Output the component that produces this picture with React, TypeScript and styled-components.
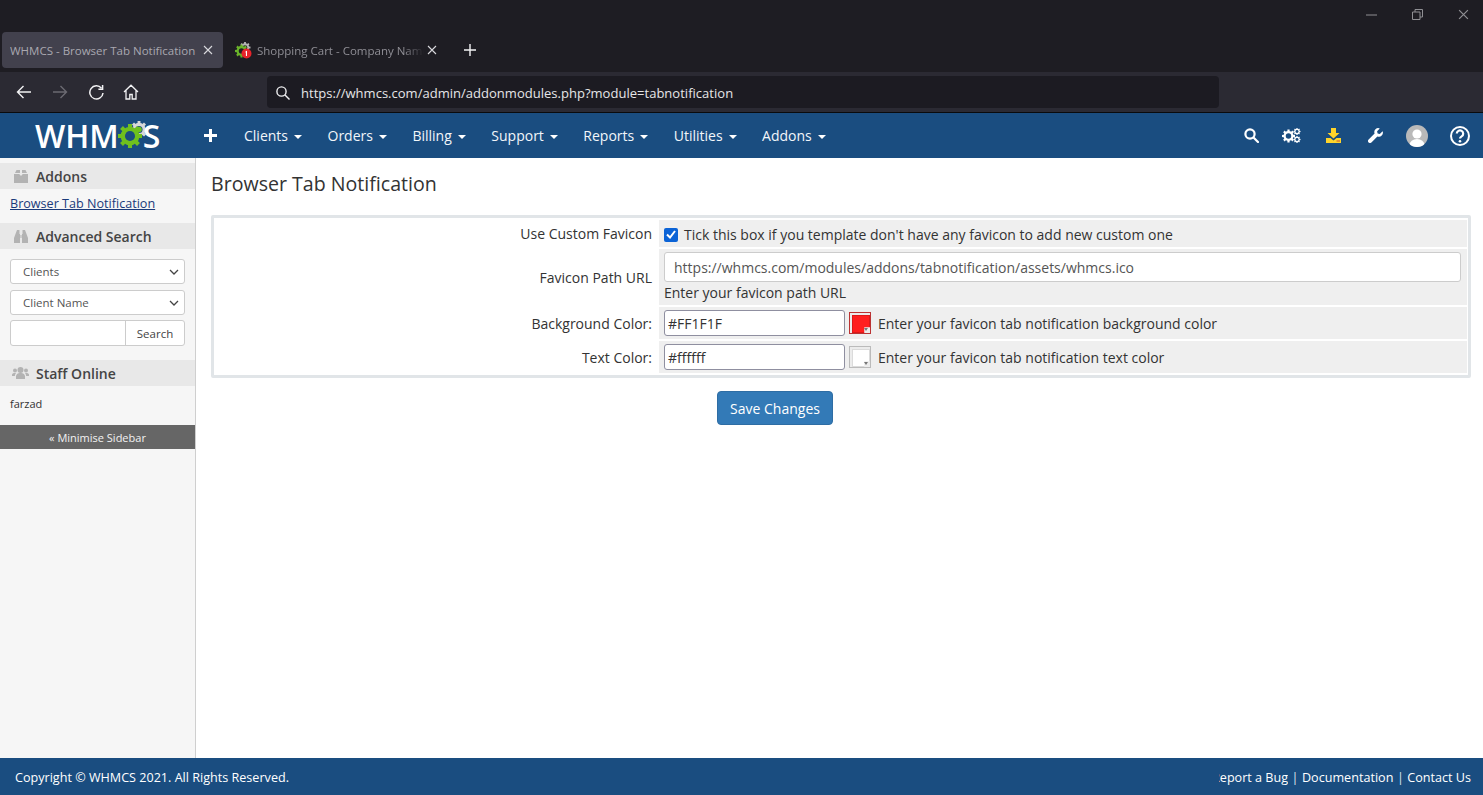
import React from "react";
import styled, { createGlobalStyle } from "styled-components";

const Global = createGlobalStyle`
  html, body { margin: 0; padding: 0; height: 100%; overflow: hidden; background: #fff; }
  body { font-family: "Open Sans", "Liberation Sans", sans-serif; color: #333; }
  * { box-sizing: border-box; }
`;

const Page = styled.div`
  height: 795px; display: flex; flex-direction: column;
`;

const TabStrip = styled.div`
  height: 72px; background: #1e1d23; display: flex; flex-direction: column; flex: none;
`;
const TitleBar = styled.div`
  height: 32px; display: flex; justify-content: flex-end; align-items: flex-start; color: #8f8f93; padding-right: 5px; gap: 16px;
`;
const WinButton = styled.div`
  width: 30px; height: 29px; display: flex; align-items: center; justify-content: center;
`;
const Tabs = styled.div`
  height: 36px; display: flex; align-items: center; padding-left: 2px;
`;
const Tab = styled.div<{ $active?: boolean; $w: number }>`
  width: ${p => p.$w}px; height: 36px; border-radius: 4px; display: flex; align-items: center;
  background: ${p => (p.$active ? "#42414d" : "transparent")};
  padding-left: ${p => (p.$active ? 8 : 12)}px;
  color: ${p => (p.$active ? "#a9a8b0" : "#8f8e95")};
  font-size: 11.5px; white-space: nowrap; overflow: hidden;
`;
const TabTitle = styled.span<{ $w: number; $fade?: boolean }>`
  width: ${p => p.$w}px; overflow: hidden; flex: none;
  ${p => p.$fade && "mask-image: linear-gradient(to right, #000 88%, transparent 100%);"}
`;
const TabClose = styled.span<{ $gap: number }>`
  display: flex; margin-left: ${p => p.$gap}px; color: #d8d8dc; flex: none;
`;
const Favicon = styled.span`
  display: flex; margin-right: 5px; flex: none;
`;
const NewTab = styled.div`
  display: flex; color: #f4f4f5; margin-left: 18px;
`;

const Toolbar = styled.div`
  height: 40px; background: #2b2a33; display: flex; align-items: center; flex: none; padding-left: 16px;
`;
const NavIcon = styled.span<{ $gap: number; $dim?: boolean }>`
  display: flex; width: 16px; margin-right: ${p => p.$gap}px; color: ${p => (p.$dim ? "#6b6a72" : "#f2f2f4")};
`;
const UrlBar = styled.div`
  margin-left: 128px; width: 952px; height: 32px; background: #1c1b22; border-radius: 4px; display: flex;
  align-items: center; padding: 1px 0 0 9px; color: #e6e6e8; font-size: 13px; letter-spacing: .02px;
`;
const UrlIcon = styled.span`
  display: flex; margin-right: 11px;
`;

const Divider = styled.div`
  height: 1px; background: #0a0a0c; flex: none;
`;

const TopNav = styled.nav`
  height: 45px; background: #1a4d80; display: flex; align-items: center; color: #fff; flex: none;
`;
const Logo = styled.div`
  width: 204px; padding-left: 35px; display: flex; align-items: center;
  font-weight: 600; font-size: 32px; letter-spacing: 0; color: #fff; line-height: 1;
`;
const LogoGear = styled.svg`
  width: 30px; height: 28px; margin: -1px -5px 0 -1px; flex: none;
`;
const PlusItem = styled.div`
  width: 40px; display: flex;
`;
const MenuList = styled.div`
  display: flex; align-items: center; flex: 1;
`;
const MenuItem = styled.div`
  font-size: 14px; margin-right: 25.5px; display: flex; align-items: center; gap: 6px; color: #f2f6fa;
  white-space: nowrap;
`;
const Caret = styled.span`
  width: 0; height: 0; border-left: 4px solid transparent; border-right: 4px solid transparent;
  border-top: 4px solid #fff; margin-top: 2px;
`;
const IconTray = styled.div`
  display: flex; align-items: center; padding-right: 1px;
`;
const TrayIcon = styled.span<{ $w: number }>`
  width: ${p => p.$w}px; display: flex; justify-content: center; align-items: center;
`;

const Body = styled.div`
  flex: 1; display: flex; min-height: 0;
`;
const Sidebar = styled.aside`
  width: 196px; background: #f6f6f6; border-right: 1px solid #cfcfcf; padding-top: 5px; flex: none;
`;
const SideHead = styled.div`
  height: 26px; background: #e8e8e8; display: flex; align-items: center; padding-left: 12px; color: #444;
  font-size: 14px; font-weight: 600; gap: 7px;
`;
const SideIcon = styled.span`
  display: flex; width: 17px; justify-content: center; color: #b3b3b3;
`;
const SideLink = styled.a`
  display: block; padding: 6px 10px 0; height: 34px; font-size: 12.6px; line-height: 18px; color: #1a3a7a;
  text-decoration: underline;
`;
const SideForm = styled.div`
  padding: 10px 10px 14px; display: flex; flex-direction: column; gap: 6px;
`;
const SelectBox = styled.div`
  height: 25px; background: #fff; border: 1px solid #ccc; border-radius: 3px; display: flex; align-items: center;
  justify-content: space-between; padding: 0 5px 0 12px; font-size: 11.5px; color: #555;
`;
const SearchGroup = styled.div`
  height: 26px; margin-top: -1px; background: #fff; border: 1px solid #ccc; border-radius: 3px; display: flex; font-size: 11.5px; color: #444;
`;
const SearchField = styled.div`
  flex: 1; border-right: 1px solid #ccc;
`;
const SearchBtn = styled.div`
  width: 58px; display: flex; align-items: center; justify-content: center;
`;
const StaffName = styled.div`
  padding: 10px 10px 0; height: 39px; font-size: 11px; line-height: 16px; color: #333;
`;
const Minimise = styled.div`
  height: 24px; background: #666; color: #f2f2f2; font-size: 11px; display: flex; align-items: center; justify-content: center;
`;

const Main = styled.main`
  flex: 1; padding: 13px 12px 0 15px; min-width: 0;
`;
const Title = styled.h1`
  margin: 0 0 18px; font-size: 19.6px; font-weight: 400; line-height: 26px; color: #333;
`;
const FormTable = styled.div`
  border: 3px solid #e1e5e8; padding: 2px 1px 2px 0; display: flex; flex-direction: column; gap: 2px; border-radius: 2px;
  height: 163px;
`;
const Row = styled.div<{ $h: number }>`
  display: grid; grid-template-columns: 445px 1fr; height: ${p => p.$h}px; font-size: 14px; color: #333;
`;
const Label = styled.div`
  display: flex; align-items: center; justify-content: flex-end; padding: 0 7px 0 0; white-space: nowrap;
`;
const Field = styled.div<{ $top?: number }>`
  background: #efefef; padding: ${p => p.$top ?? 0}px 5px 0; display: flex; align-items: center; gap: 7px; white-space: nowrap;
`;
const FieldStack = styled(Field)`
  flex-direction: column; align-items: stretch; justify-content: flex-start; padding-top: 3px; gap: 2px;
`;
const Check = styled.span`
  width: 14px; height: 14px; background: #0b63d6; border-radius: 2px; display: flex; align-items: center; justify-content: center; flex: none; margin-right: -1px;
`;
const UrlInput = styled.div`
  height: 30px; background: #fff; border: 1px solid #ccc; border-radius: 3px; padding: 0 9px; display: flex; align-items: center;
  color: #555; width: 797px;
`;
const Hint = styled.div`
  line-height: 17px;
`;
const ColorInput = styled.div`
  width: 181px; height: 26px; background: #fff; border: 1px solid #8f8fa0; border-radius: 3px; padding: 1px 3px 0; display: flex; align-items: center;
  color: #333;
`;
const Swatch = styled.div<{ $color: string; $border: string }>`
  width: 22px; height: 22px; border: 1px solid ${p => p.$border}; background: #ececec; padding: 2px; position: relative; flex: none;
  margin-left: -3px;
  &::before {
    content: ""; display: block; width: 100%; height: 100%; background: ${p => p.$color};
    border: 1px solid rgba(0, 0, 0, .14);
    clip-path: polygon(0 0, 100% 0, 100% 68%, 68% 68%, 68% 100%, 0 100%);
  }
  &::after { content: ""; position: absolute; right: 2px; bottom: 2px; border-left: 2px solid transparent; border-right: 2px solid transparent; border-top: 3px solid #777; }
`;
const SaveRow = styled.div`
  display: flex; padding: 13px 0 0 506px;
`;
const SaveBtn = styled.div`
  width: 116px; height: 34px; background: #337ab7; border: 1px solid #2e6da4; border-radius: 4px; color: #fff; font-size: 14px;
  display: flex; align-items: center; justify-content: center;
`;

const Footer = styled.footer`
  height: 37px; background: #1a4d80; color: #fff; display: flex; align-items: center; justify-content: space-between; font-size: 12.6px; flex: none;
  padding: 1px 12px 0 15px;
`;
const FootLinks = styled.div`
  display: flex; align-items: center; white-space: nowrap;
`;
const Clipped = styled.span`
  width: 69px; overflow: hidden; display: flex; justify-content: flex-end; white-space: nowrap;
`;
const Sep = styled.span`
  margin: 0 3.5px; color: #dfe7ef;
`;

const X = ({ s = 10 }: { s?: number }) => (
  <svg width={s} height={s} viewBox="0 0 10 10" stroke="currentColor" strokeWidth="1.1"><path d="M1 1l8 8M9 1l-8 8" /></svg>
);

const Gear = ({ x, y, r, fill, hole, teeth = 8 }: { x: number; y: number; r: number; fill: string; hole: string; teeth?: number }) => (
  <g>
    <circle cx={x} cy={y} r={r * 0.78} fill={fill} />
    {Array.from({ length: teeth }).map((_, i) => (
      <rect key={i} x={x - r * 0.17} y={y - r} width={r * 0.34} height={r * 0.4} fill={fill} transform={`rotate(${(i * 360) / teeth} ${x} ${y})`} />
    ))}
    <circle cx={x} cy={y} r={r * 0.42} fill={hole} />
  </g>
);

const Caretted = ({ label }: { label: string }) => (
  <MenuItem>{label}<Caret /></MenuItem>
);

export default function App() {
  return (
    <Page>
      <Global />
      <TabStrip>
        <TitleBar>
          <WinButton>
            <svg width="11" height="2" viewBox="0 0 11 2"><path d="M0 1h11" stroke="currentColor" /></svg>
          </WinButton>
          <WinButton>
            <svg width="11" height="11" viewBox="0 0 11 11" fill="none" stroke="currentColor"><path d="M.5 3h7.500v7.500H.5zM3 3V.5h7.500V8H8" /></svg>
          </WinButton>
          <WinButton><X s={11} /></WinButton>
        </TitleBar>
        <Tabs>
          <Tab $active $w={221}>
            <TabTitle $w={186}>WHMCS - Browser Tab Notification</TabTitle>
            <TabClose $gap={7}><X /></TabClose>
          </Tab>
          <Tab $w={223}>
            <Favicon>
              <svg width="17" height="17" viewBox="0 0 17 17">
                <Gear x={10} y={5.500} r={5.500} fill="#b5b5b5" hole="#1e1d23" />
                <Gear x={6.500} y={9} r={6.500} fill="#6ab42a" hole="#1e1d23" />
                <circle cx="11.500" cy="11.500" r="5" fill="#e8232a" />
                <path d="M10.800 9.300l1.200-.6v5.400h-1.100v-3.900l-.8.3z" fill="#fff" />
              </svg>
            </Favicon>
            <TabTitle $w={167} $fade>Shopping Cart - Company Name</TabTitle>
            <TabClose $gap={3}><X /></TabClose>
          </Tab>
          <NewTab>
            <svg width="12" height="12" viewBox="0 0 12 12" stroke="currentColor" strokeWidth="1.4"><path d="M6 0v12M0 6h12" /></svg>
          </NewTab>
        </Tabs>
      </TabStrip>

      <Toolbar>
        <NavIcon $gap={20}>
          <svg width="16" height="16" viewBox="0 0 16 16" fill="none" stroke="currentColor" strokeWidth="1.4"><path d="M15 8H1.500M7.500 2L1.500 8l6 6" /></svg>
        </NavIcon>
        <NavIcon $gap={20} $dim>
          <svg width="16" height="16" viewBox="0 0 16 16" fill="none" stroke="currentColor" strokeWidth="1.4"><path d="M1 8h13.500M8.500 2l6 6-6 6" /></svg>
        </NavIcon>
        <NavIcon $gap={19}>
          <svg width="16" height="16" viewBox="0 0 16 16" fill="none" stroke="currentColor" strokeWidth="1.5"><path d="M13.500 4.200A6.600 6.600 0 1 0 15 9" /><path d="M14.600 1v4.200h-4.200" /></svg>
        </NavIcon>
        <NavIcon $gap={0}>
          <svg width="16" height="16" viewBox="0 0 16 16" fill="none" stroke="currentColor" strokeWidth="1.3"><path d="M1 8l7-6.800L15 8M3 6.500V15h3.800v-4.500h2.400V15H13V6.500" /></svg>
        </NavIcon>
        <UrlBar>
          <UrlIcon>
            <svg width="14" height="14" viewBox="0 0 14 14" fill="none" stroke="#f0f0f2" strokeWidth="1.4"><circle cx="5.500" cy="5.500" r="4.600" /><path d="M9 9l4.500 4.500" /></svg>
          </UrlIcon>
          https://whmcs.com/admin/addonmodules.php?module=tabnotification
        </UrlBar>
      </Toolbar>
      <Divider />

      <TopNav>
        <Logo>
          WHM
          <LogoGear viewBox="0 0 30 28">
            <Gear x={21} y={8.500} r={8.500} fill="#d8d8d8" hole="#1a4d80" />
            <Gear x={12} y={15} r={12} fill="#6fc01e" hole="#1a4d80" />
            <circle cx="21" cy="8.500" r="2.800" fill="#6fc01e" />
          </LogoGear>
          S
        </Logo>
        <PlusItem>
          <svg width="13" height="13" viewBox="0 0 13 13" stroke="#fff" strokeWidth="3"><path d="M6.500 0v13M0 6.500h13" /></svg>
        </PlusItem>
        <MenuList>
          {["Clients", "Orders", "Billing", "Support", "Reports", "Utilities", "Addons"].map(l => (
            <Caretted key={l} label={l} />
          ))}
        </MenuList>
        <IconTray>
          <TrayIcon $w={38}>
            <svg width="15" height="15" viewBox="0 0 15 15" fill="none" stroke="#fff" strokeWidth="2.200"><circle cx="6" cy="6" r="4.600" /><path d="M9.500 9.500l4.500 4.500" strokeLinecap="round" /></svg>
          </TrayIcon>
          <TrayIcon $w={42}>
            <svg width="19" height="15" viewBox="0 0 19 15">
              <Gear x={6.500} y={8} r={6.500} fill="#fff" hole="#1a4d80" />
              <Gear x={15} y={3.500} r={3.500} fill="#fff" hole="#1a4d80" />
              <Gear x={15} y={11.500} r={3.500} fill="#fff" hole="#1a4d80" />
            </svg>
          </TrayIcon>
          <TrayIcon $w={42}>
            <svg width="15" height="15" viewBox="0 0 15 15"><path d="M5 0h5v5h3.500L7.500 10.500 1.500 5H5z" fill="#ffd42a" /><path d="M0 10h4.500l3 2.500 3-2.500H15v5H0z" fill="#ffd42a" /><rect x="10.500" y="12.500" width="3.500" height="1" fill="#c9503a" /></svg>
          </TrayIcon>
          <TrayIcon $w={42}>
            <svg width="15" height="15" viewBox="0 0 15 15"><path d="M14.600 3.200l-2.800 2.700-2.200-.5-.5-2.200L11.800.4A4 4 0 0 0 6.600 5.600L.6 11.600a1.900 1.900 0 0 0 2.800 2.800l6-6a4 4 0 0 0 5.200-5.200z" fill="#fff" /></svg>
          </TrayIcon>
          <TrayIcon $w={42}>
            <svg width="22" height="22" viewBox="0 0 22 22">
              <defs><clipPath id="av"><circle cx="11" cy="11" r="11" /></clipPath></defs>
              <circle cx="11" cy="11" r="11" fill="#b9b9b9" />
              <g clipPath="url(#av)" fill="#fff"><circle cx="11" cy="9" r="4.600" /><ellipse cx="11" cy="20" rx="7.500" ry="6" /></g>
            </svg>
          </TrayIcon>
          <TrayIcon $w={44}>
            <svg width="20" height="20" viewBox="0 0 20 20" fill="none" stroke="#fff"><circle cx="10" cy="10" r="9" strokeWidth="2" /><path d="M6.800 7.600a3.200 3.200 0 1 1 4.800 2.800c-1 .6-1.600 1.100-1.600 2.200" strokeWidth="2.200" /><circle cx="10" cy="15.200" r="1.300" fill="#fff" stroke="none" /></svg>
          </TrayIcon>
        </IconTray>
      </TopNav>

      <Body>
        <Sidebar>
          <SideHead>
            <SideIcon>
              <svg width="14" height="13" viewBox="0 0 14 13" fill="currentColor"><path d="M1 3l1.500-3H6v3zM8 0h3.500L13 3H8zM0 4h5.200L7 6l1.800-2H14v9H0z" /></svg>
            </SideIcon>
            Addons
          </SideHead>
          <SideLink>Browser Tab Notification</SideLink>
          <SideHead>
            <SideIcon>
              <svg width="14" height="13" viewBox="0 0 14 13" fill="currentColor"><path d="M3 0h2.500v4H6v9H0V8zM8.500 0H11l3 8v5H8V4h.5zM6.500 5h1v3h-1z" /></svg>
            </SideIcon>
            Advanced Search
          </SideHead>
          <SideForm>
            <SelectBox>
              Clients
              <svg width="10" height="6" viewBox="0 0 10 6" fill="none" stroke="#444" strokeWidth="1.300"><path d="M1 1l4 4 4-4" /></svg>
            </SelectBox>
            <SelectBox>
              Client Name
              <svg width="10" height="6" viewBox="0 0 10 6" fill="none" stroke="#444" strokeWidth="1.300"><path d="M1 1l4 4 4-4" /></svg>
            </SelectBox>
            <SearchGroup>
              <SearchField />
              <SearchBtn>Search</SearchBtn>
            </SearchGroup>
          </SideForm>
          <SideHead>
            <SideIcon>
              <svg width="17" height="12" viewBox="0 0 17 12" fill="currentColor"><circle cx="8.500" cy="3" r="3" /><path d="M4 12V9a4 4 0 0 1 4-3h1a4 4 0 0 1 4 3v3z" /><circle cx="3" cy="3.500" r="2" /><circle cx="14" cy="3.500" r="2" /><path d="M0 9V7.500A2 2 0 0 1 2 6h2a5 5 0 0 0-1.200 3zM17 9V7.500A2 2 0 0 0 15 6h-2a5 5 0 0 1 1.200 3z" /></svg>
            </SideIcon>
            Staff Online
          </SideHead>
          <StaffName>farzad</StaffName>
          <Minimise>« Minimise Sidebar</Minimise>
        </Sidebar>
        <Main>
          <Title>Browser Tab Notification</Title>
          <FormTable>
            <Row $h={27}>
              <Label>Use Custom Favicon</Label>
              <Field $top={2}>
                <Check>
                  <svg width="10" height="9" viewBox="0 0 10 9" fill="none" stroke="#fff" strokeWidth="2"><path d="M1 4.500l3 3 5-6.500" /></svg>
                </Check>
                Tick this box if you template don't have any favicon to add new custom one
              </Field>
            </Row>
            <Row $h={56}>
              <Label>Favicon Path URL</Label>
              <FieldStack>
                <UrlInput>https://whmcs.com/modules/addons/tabnotification/assets/whmcs.ico</UrlInput>
                <Hint>Enter your favicon path URL</Hint>
              </FieldStack>
            </Row>
            <Row $h={32}>
              <Label>Background Color:</Label>
              <Field>
                <ColorInput>#FF1F1F</ColorInput>
                <Swatch $color="#ff1f1f" $border="#b33" />
                Enter your favicon tab notification background color
              </Field>
            </Row>
            <Row $h={32}>
              <Label>Text Color:</Label>
              <Field>
                <ColorInput>#ffffff</ColorInput>
                <Swatch $color="#ffffff" $border="#bbb" />
                Enter your favicon tab notification text color
              </Field>
            </Row>
          </FormTable>
          <SaveRow><SaveBtn>Save Changes</SaveBtn></SaveRow>
        </Main>
      </Body>

      <Footer>
        <span>Copyright © WHMCS 2021. All Rights Reserved.</span>
        <FootLinks>
          <Clipped>Report a Bug</Clipped><Sep>|</Sep>Documentation<Sep>|</Sep>Contact Us
        </FootLinks>
      </Footer>
    </Page>
  );
}
